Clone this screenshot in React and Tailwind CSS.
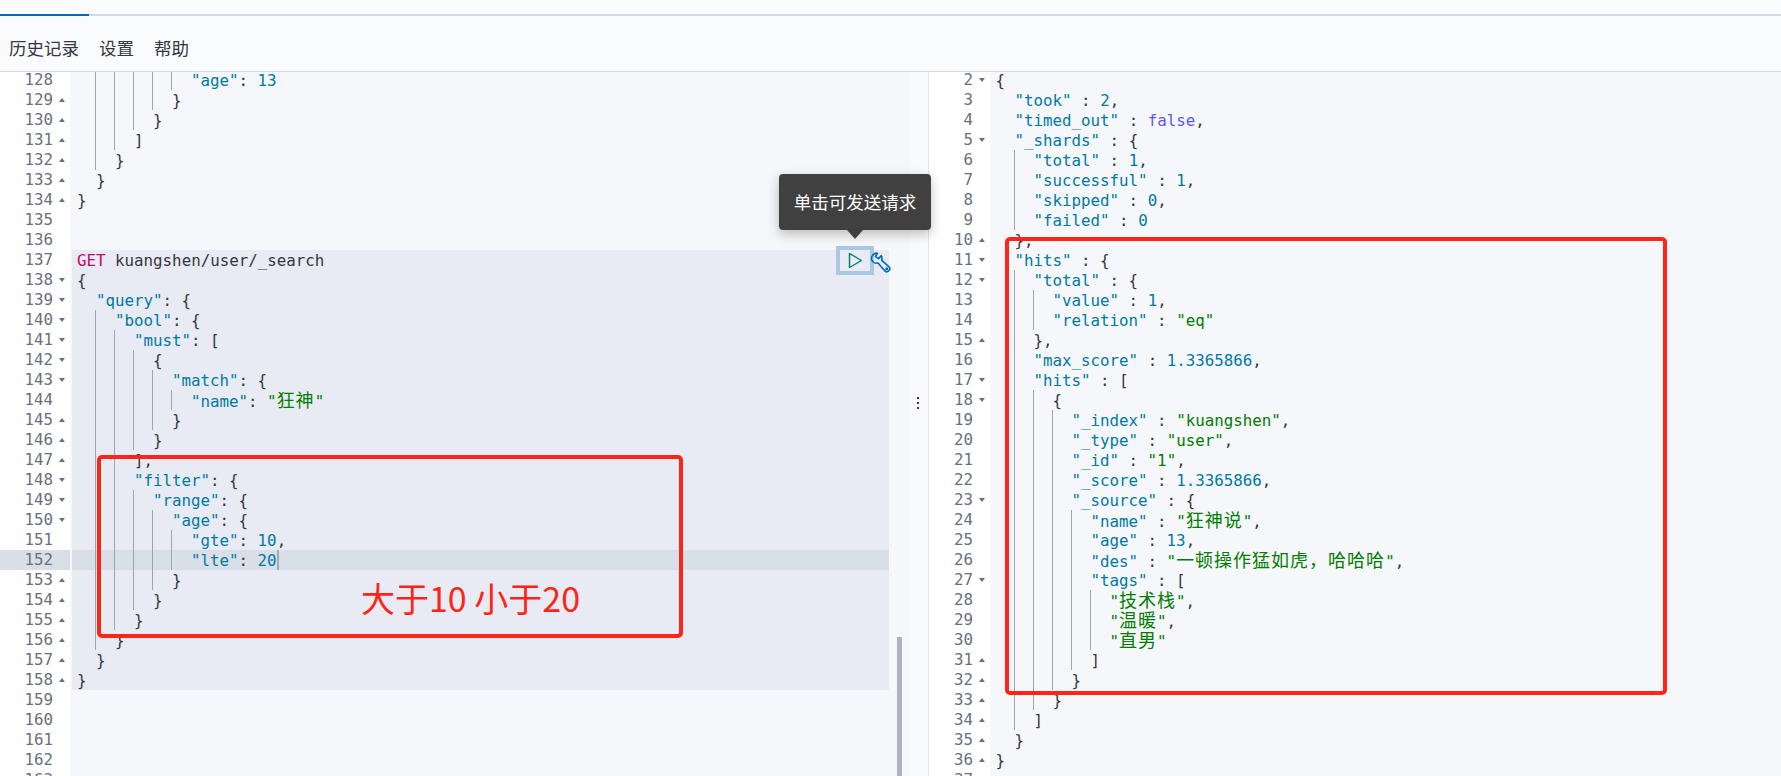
import React from 'react';

const leftLines = [
  '            "age": 13',
  '          }',
  '        }',
  '      ]',
  '    }',
  '  }',
  '}',
  '',
  '',
  'GET kuangshen/user/_search',
  '{',
  '  "query": {',
  '    "bool": {',
  '      "must": [',
  '        {',
  '          "match": {',
  '            "name": "狂神"',
  '          }',
  '        }',
  '      ],',
  '      "filter": {',
  '        "range": {',
  '          "age": {',
  '            "gte": 10,',
  '            "lte": 20',
  '          }',
  '        }',
  '      }',
  '    }',
  '  }',
  '}',
  '',
  '',
  '',
  '',
  '',
];

const rightLines = [
  '{',
  '  "took" : 2,',
  '  "timed_out" : false,',
  '  "_shards" : {',
  '    "total" : 1,',
  '    "successful" : 1,',
  '    "skipped" : 0,',
  '    "failed" : 0',
  '  },',
  '  "hits" : {',
  '    "total" : {',
  '      "value" : 1,',
  '      "relation" : "eq"',
  '    },',
  '    "max_score" : 1.3365866,',
  '    "hits" : [',
  '      {',
  '        "_index" : "kuangshen",',
  '        "_type" : "user",',
  '        "_id" : "1",',
  '        "_score" : 1.3365866,',
  '        "_source" : {',
  '          "name" : "狂神说",',
  '          "age" : 13,',
  '          "des" : "一顿操作猛如虎，哈哈哈",',
  '          "tags" : [',
  '            "技术栈",',
  '            "温暖",',
  '            "直男"',
  '          ]',
  '        }',
  '      }',
  '    ]',
  '  }',
  '}',
  '',
];

const tokenPattern = /("(?:[^"])*")(\s*:)?|(GET)|(kuangshen\/user\/_search)|(false)|(\d+(?:\.\d+)?)|([^"\d]+?(?=$|"|\d|false))/g;

const StringText = ({ text }) =>
  text.split(/([\u3000-\u9fff\uff00-\uffef]+)/).map((part, i) =>
    i % 2 === 1 ? (
      <span key={i} className="text-[18px] leading-none tracking-[1px] font-['Noto_Sans_CJK_SC',sans-serif]">
        {part}
      </span>
    ) : (
      part
    )
  );

const Tokens = ({ text }) => {
  const out = [];
  let m;
  let key = 0;
  tokenPattern.lastIndex = 0;
  while ((m = tokenPattern.exec(text)) !== null) {
    if (m[0] === '') {
      tokenPattern.lastIndex++;
      continue;
    }
    if (m[1]) {
      if (m[2]) {
        out.push(<span key={key++} className="text-[#0079a5]">{m[1]}</span>);
        out.push(<span key={key++}>{m[2]}</span>);
      } else {
        out.push(
          <span key={key++} className="text-[#017d01]">
            <StringText text={m[1]} />
          </span>
        );
      }
    } else if (m[3]) {
      out.push(<span key={key++} className="text-[#c4076e]">{m[3]}</span>);
    } else if (m[4]) {
      out.push(<span key={key++} className="text-[#017d73]">{m[4]}</span>);
    } else if (m[5]) {
      out.push(<span key={key++} className="text-[#5a5af0]">{m[5]}</span>);
    } else if (m[6]) {
      out.push(<span key={key++} className="text-[#0079a5]">{m[6]}</span>);
    } else {
      out.push(<span key={key++}>{m[0]}</span>);
    }
  }
  return out;
};

const FoldMark = ({ text }) => {
  const t = text.trim();
  if (/[{[]$/.test(t)) {
    return <span className="w-0 h-0 border-x-[3px] border-x-transparent border-t-[4px] border-t-[#69707d]" />;
  }
  if (/^[}\]]/.test(t)) {
    return <span className="w-0 h-0 border-x-[3px] border-x-transparent border-b-[4px] border-b-[#69707d]" />;
  }
  return null;
};

const Row = ({ num, text, active, tinted, cursor, gutterW, originPad, tintInset }) => {
  const trimmed = text.trimStart();
  const levels = (text.length - trimmed.length) / 2;
  return (
    <div className="flex h-5 shrink-0 leading-[22px]">
      <div className={`${gutterW} ${active ? 'bg-[#d9dfe8]' : 'bg-white'} shrink-0 flex items-center text-[#69707d]`}>
        <span className="flex-1 text-right">{num}</span>
        <span className="w-[17px] pl-[6px] flex items-center">
          <FoldMark text={text} />
        </span>
      </div>
      <div className={`flex-1 min-w-0 ${tintInset}`}>
        <div
          className={`flex h-5 whitespace-pre text-[#343741] ${originPad} ${
            active ? 'bg-[#d9dfe8]' : tinted ? 'bg-[#e8ebf3]' : ''
          }`}
        >
          {Array.from({ length: levels }).map((_, i) => (
            <span key={i} className={`w-[19px] h-5 shrink-0 ${i > 0 ? 'border-l border-[#9ea4b0]' : ''}`} />
          ))}
          <span className="pl-px">
            <Tokens text={trimmed} />
          </span>
          {cursor && <span className="w-0.5 h-5 bg-[#a3a9b5]" />}
        </div>
      </div>
    </div>
  );
};

const RedBox = ({ className }) => (
  <div className={`absolute border-4 border-[#ff2415] rounded-[5px] pointer-events-none ${className}`} />
);

export default function App() {
  return (
    <div className="h-[776px] w-[1781px] overflow-hidden flex flex-col bg-white relative font-['DejaVu_Sans_Mono',monospace] text-[15.8px]">
      <div className="h-4 shrink-0 bg-[#fafbfd] border-b-2 border-[#d3dae6] flex">
        <div className="w-[89px] h-0.5 mt-[14px] bg-[#006bb4]" />
      </div>
      <div className="h-[56px] shrink-0 bg-[#fafbfd] border-b border-[#d3dae6] flex items-center pl-[9px] gap-5 pt-2.5 text-[17.5px] text-[#343741] font-['Noto_Sans_CJK_SC',sans-serif]">
        <span>历史记录</span>
        <span>设置</span>
        <span>帮助</span>
      </div>

      <div className="flex-1 min-h-0 flex overflow-hidden">
        {/* request editor */}
        <div className="w-[910px] shrink-0 relative overflow-hidden bg-[#f5f7fa]">
          <div className="flex flex-col -mt-0.5 w-[889px]">
            {leftLines.map((line, i) => {
              const num = 128 + i;
              return (
                <Row
                  key={num}
                  num={num}
                  text={line}
                  active={num === 152}
                  tinted={num >= 137 && num <= 158}
                  cursor={num === 152}
                  gutterW="w-[70px]"
                  originPad="pl-[4px]"
                  tintInset="ml-[2px]"
                />
              );
            })}
          </div>
          <div className="absolute right-[8px] w-[5px] top-[565px] bottom-0 bg-[#b0b3bd]" />
        </div>

        {/* resizer */}
        <div className="w-[19px] shrink-0 bg-[#f9fafc] border-r border-[#e0e3ee] flex flex-col items-center justify-center gap-[3px] pb-[42px] pr-[2px]">
          <span className="w-0.5 h-0.5 bg-[#5b2a35]" />
          <span className="w-0.5 h-0.5 bg-[#5b2a35]" />
          <span className="w-0.5 h-0.5 bg-[#5b2a35]" />
        </div>

        {/* response editor */}
        <div className="flex-1 min-w-0 overflow-hidden bg-[#f5f7fa]">
          <div className="flex flex-col -mt-0.5">
            {rightLines.map((line, i) => (
              <Row
                key={i}
                num={i + 2}
                text={line}
                gutterW="w-[61px]"
                originPad="pl-[4.5px]"
                tintInset=""
              />
            ))}
          </div>
        </div>
      </div>

      {/* tooltip over the play button */}
      <div className="absolute left-[779px] top-[174px] w-[152px] h-14 bg-[#404040] rounded-[4px] shadow-[0_4px_12px_rgba(0,0,0,0.25)] flex items-center justify-center text-white text-[17.5px] font-['Noto_Sans_CJK_SC',sans-serif]">
        单击可发送请求
        <div className="absolute left-[68px] top-14 w-0 h-0 border-x-[8.5px] border-x-transparent border-t-[9px] border-t-[#404040]" />
      </div>

      <div className="absolute left-[836px] top-[246px] w-[38px] h-[29px] border-4 border-[#a9c9e3] flex items-center justify-center">
        <svg width="15" height="17" viewBox="0 0 15 17" fill="none" stroke="#017d73" strokeWidth="1.4" strokeLinejoin="round">
          <path d="M1.5 1.5 L13.5 8.5 L1.5 15.5 Z" />
        </svg>
      </div>
      <svg className="absolute left-[870px] top-[252px]" width="21" height="21" viewBox="0 0 21 21" fill="none" stroke="#006bb4" strokeWidth="1.6" strokeLinejoin="round" strokeLinecap="round">
        <path d="M7.5 1.2 A5.4 5.4 0 0 0 1.6 7.8 A5.4 5.4 0 0 0 8 11 L14.5 18.6 A2.9 2.9 0 0 0 19 14.8 L11.6 8.2 A5.4 5.4 0 0 0 11.3 3.6 L8.6 6.6 L5.5 4.6 Z" />
        <circle cx="16.7" cy="16.7" r="0.7" />
      </svg>

      {/* red annotations */}
      <RedBox className="left-[97px] top-[455px] w-[586px] h-[183px]" />
      <RedBox className="left-[1005px] top-[237px] w-[662px] h-[458px]" />
      <div className="absolute left-[361px] top-[575px] text-[34px] leading-[46px] whitespace-pre text-[#ff2415] font-['Noto_Sans_CJK_SC',sans-serif]">
        大于10 小于20
      </div>
    </div>
  );
}
